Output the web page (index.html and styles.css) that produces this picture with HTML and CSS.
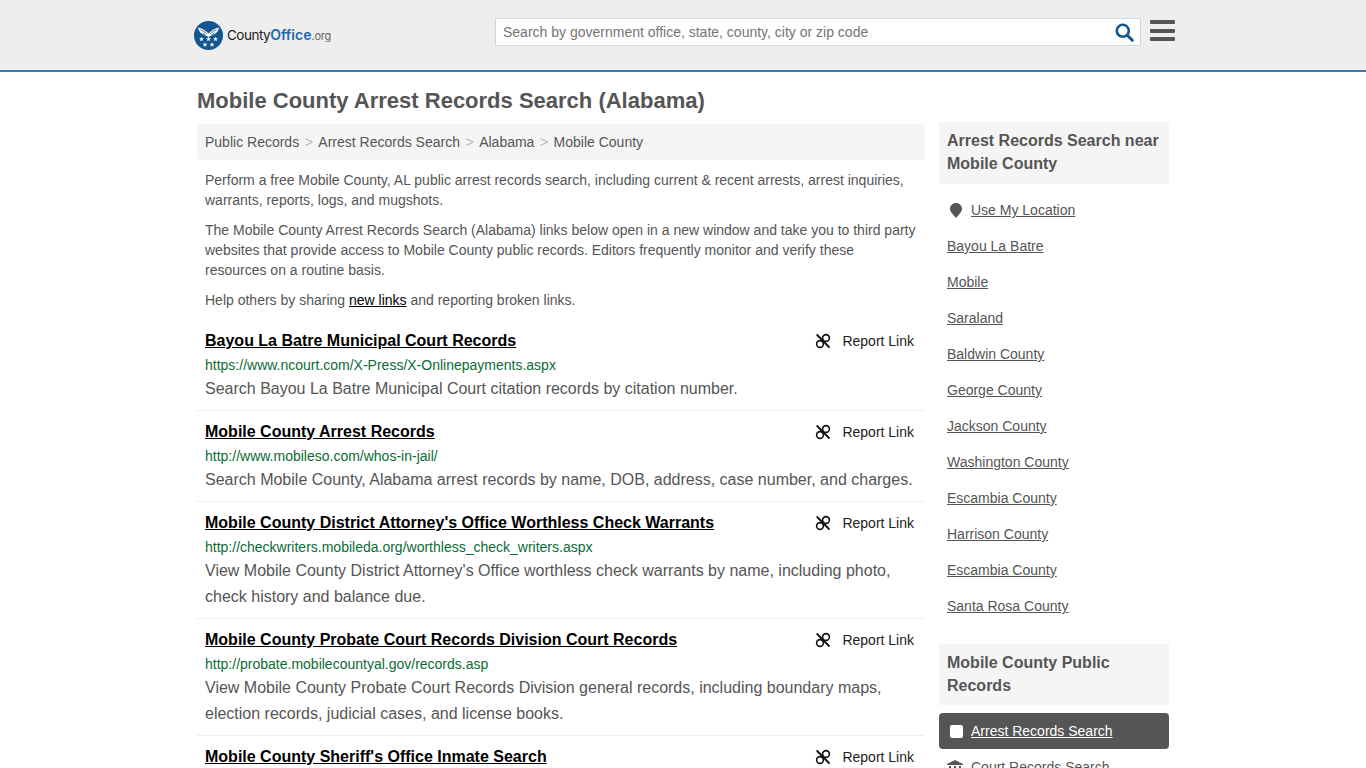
FILE: index.html
```html
<!DOCTYPE html>
<html lang="en">
<head>
    <meta charset="UTF-8">
    <title>Mobile County Arrest Records Search (Alabama)</title>
    <link rel="stylesheet" href="styles.css">
</head>
<body>
    <svg class="sprites" width="0" height="0">
        <symbol id="unlink" viewBox="0 0 16 16">
            <circle cx="11" cy="5" r="3.400" fill="none" stroke="currentColor" stroke-width="1.600"/>
            <circle cx="5" cy="11" r="3.400" fill="none" stroke="currentColor" stroke-width="1.600"/>
            <path d="M2.200 2 L14 14" fill="none" stroke="currentColor" stroke-width="1.800" stroke-linecap="round"/>
        </symbol>
        <symbol id="star" viewBox="0 0 10 10">
            <path d="M5 0 L6.200 3.600 H10 L7 5.900 L8.100 9.600 L5 7.400 L1.900 9.600 L3 5.900 L0 3.600 H3.800 Z" fill="#fff"/>
        </symbol>
    </svg>

    <header class="site-header">
        <div class="wrap header-row">
            <a class="logo" href="#">
                <svg class="logo-mark" width="29" height="29" viewBox="0 0 29 29">
                    <circle cx="14.500" cy="14.500" r="14.500" fill="#14568f"/>
                    <path d="M4 6.500 C8 7 11 9 14.500 12.500 C18 9 21 7 25 6.500 C24.500 10 22 13 18.500 14 L14.500 16 L10.500 14 C7 13 4.500 10 4 6.500 Z" fill="#fff"/>
                    <path d="M6.500 8.800 C9 9.500 11 11 12.800 13 M8.500 12 L11.500 13.600 M22.500 8.800 C20 9.500 18 11 16.200 13 M20.500 12 L17.500 13.600" fill="none" stroke="#14568f" stroke-width=".8"/>
                    <use href="#star" x="5" y="15.500" width="5" height="5"/>
                    <use href="#star" x="12" y="15.500" width="5" height="5"/>
                    <use href="#star" x="19" y="15.500" width="5" height="5"/>
                    <use href="#star" x="8.500" y="21" width="5" height="5"/>
                    <use href="#star" x="15.500" y="21" width="5" height="5"/>
                </svg>
                <span class="logo-text">County<b>Office</b><small>.org</small></span>
            </a>
            <form class="search">
                <input type="text" placeholder="Search by government office, state, county, city or zip code">
                <svg class="search-icon" width="19" height="19" viewBox="0 0 19 19">
                    <circle cx="7.800" cy="7.800" r="6" fill="none" stroke="#14568f" stroke-width="2.600"/>
                    <path d="M12.200 12.200 L17.300 17.300" stroke="#14568f" stroke-width="3" stroke-linecap="round"/>
                </svg>
            </form>
            <div class="burger"><span></span><span></span><span></span></div>
        </div>
    </header>

    <div class="wrap">
        <h1>Mobile County Arrest Records Search (Alabama)</h1>
        <div class="columns">
            <main class="content">
                <div class="breadcrumb">
                    <a href="#">Public Records</a><i>&gt;</i><a href="#">Arrest Records Search</a><i>&gt;</i><a href="#">Alabama</a><i>&gt;</i><a href="#">Mobile County</a>
                </div>
                <div class="intro">
                    <p>Perform a free Mobile County, AL public arrest records search, including current &amp; recent arrests, arrest inquiries, warrants, reports, logs, and mugshots.</p>
                    <p>The Mobile County Arrest Records Search (Alabama) links below open in a new window and take you to third party websites that provide access to Mobile County public records. Editors frequently monitor and verify these resources on a routine basis.</p>
                    <p>Help others by sharing <a href="#">new links</a> and reporting broken links.</p>
                </div>

                <div class="record">
                    <div class="record-head">
                        <a class="record-title" href="#">Bayou La Batre Municipal Court Records</a>
                        <a class="report" href="#"><svg width="16" height="16"><use href="#unlink"/></svg>Report Link</a>
                    </div>
                    <div class="record-url">https://www.ncourt.com/X-Press/X-Onlinepayments.aspx</div>
                    <p class="record-desc">Search Bayou La Batre Municipal Court citation records by citation number.</p>
                </div>
                <div class="record">
                    <div class="record-head">
                        <a class="record-title" href="#">Mobile County Arrest Records</a>
                        <a class="report" href="#"><svg width="16" height="16"><use href="#unlink"/></svg>Report Link</a>
                    </div>
                    <div class="record-url">http://www.mobileso.com/whos-in-jail/</div>
                    <p class="record-desc">Search Mobile County, Alabama arrest records by name, DOB, address, case number, and charges.</p>
                </div>
                <div class="record">
                    <div class="record-head">
                        <a class="record-title" href="#">Mobile County District Attorney's Office Worthless Check Warrants</a>
                        <a class="report" href="#"><svg width="16" height="16"><use href="#unlink"/></svg>Report Link</a>
                    </div>
                    <div class="record-url">http://checkwriters.mobileda.org/worthless_check_writers.aspx</div>
                    <p class="record-desc">View Mobile County District Attorney's Office worthless check warrants by name, including photo, check history and balance due.</p>
                </div>
                <div class="record">
                    <div class="record-head">
                        <a class="record-title" href="#">Mobile County Probate Court Records Division Court Records</a>
                        <a class="report" href="#"><svg width="16" height="16"><use href="#unlink"/></svg>Report Link</a>
                    </div>
                    <div class="record-url">http://probate.mobilecountyal.gov/records.asp</div>
                    <p class="record-desc">View Mobile County Probate Court Records Division general records, including boundary maps, election records, judicial cases, and license books.</p>
                </div>
                <div class="record">
                    <div class="record-head">
                        <a class="record-title" href="#">Mobile County Sheriff's Office Inmate Search</a>
                        <a class="report" href="#"><svg width="16" height="16"><use href="#unlink"/></svg>Report Link</a>
                    </div>
                </div>
            </main>

            <aside class="sidebar">
                <h2>Arrest Records Search near Mobile County</h2>
                <ul class="near">
                    <li class="locate">
                        <svg width="12" height="15" viewBox="0 0 12 15"><path d="M6 0 C9.300 0 12 2.500 12 5.800 C12 9 8 12.500 6 15 C4 12.500 0 9 0 5.800 C0 2.500 2.700 0 6 0 Z" fill="#555"/></svg>
                        <a href="#">Use My Location</a>
                    </li>
                    <li><a href="#">Bayou La Batre</a></li>
                    <li><a href="#">Mobile</a></li>
                    <li><a href="#">Saraland</a></li>
                    <li><a href="#">Baldwin County</a></li>
                    <li><a href="#">George County</a></li>
                    <li><a href="#">Jackson County</a></li>
                    <li><a href="#">Washington County</a></li>
                    <li><a href="#">Escambia County</a></li>
                    <li><a href="#">Harrison County</a></li>
                    <li><a href="#">Escambia County</a></li>
                    <li><a href="#">Santa Rosa County</a></li>
                </ul>
                <h2 class="second">Mobile County Public Records</h2>
                <ul class="topics">
                    <li class="active"><span class="check"></span><a href="#">Arrest Records Search</a></li>
                    <li>
                        <svg class="court-icon" width="16" height="14" viewBox="0 0 16 14"><path d="M8 0 L16 4 V5 H0 V4 Z M2 6 H4 V11 H2 Z M7 6 H9 V11 H7 Z M12 6 H14 V11 H12 Z M1 12 H15 V14 H1 Z" fill="#555"/></svg>
                        <a href="#">Court Records Search</a>
                    </li>
                </ul>
            </aside>
        </div>
    </div>
</body>
</html>
```

FILE: styles.css
```css
html, body {
    height: 768px;
    overflow: hidden;
}
body {
    margin: 0;
    font-family: "Liberation Sans", Arial, sans-serif;
    font-size: 14px;
    line-height: 20px;
    color: #555;
    background: #fff;
}
a {
    color: #555;
}
.sprites {
    display: block;
    height: 0;
}
.wrap {
    width: 972px;
    margin: 0 auto;
}
.site-header {
    height: 70px;
    background: #eee;
    border-bottom: 2px solid #337ab7;
}
.header-row {
    display: flex;
    align-items: center;
    height: 70px;
}
.logo {
    display: flex;
    align-items: center;
    flex: none;
    width: 301px;
    margin-left: -3px;
    text-decoration: none;
    color: #222;
}
.logo-text {
    margin-left: 4px;
    font-family: Inter, "Liberation Sans", sans-serif;
    font-size: 13.500px;
    letter-spacing: -0.5px;
}
.logo-text b {
    font-weight: 600;
    font-size: 14px;
    letter-spacing: 0;
    color: #1b6ab0;
}
.logo-text small {
    font-size: 11px;
    letter-spacing: -0.2px;
    color: #666;
}
.search {
    position: relative;
    flex: none;
    width: 646px;
    height: 28px;
    margin-top: -7px;
}
.search input {
    width: 100%;
    height: 100%;
    box-sizing: border-box;
    padding: 0 40px 0 7px;
    border: 1px solid #c9d9e8;
    background: #fff;
    font: 14px "Liberation Sans", Arial, sans-serif;
    color: #555;
    outline: none;
}
.search input::placeholder {
    color: #757575;
}
.search-icon {
    position: absolute;
    top: 5px;
    right: 7px;
}
.burger {
    display: flex;
    flex-direction: column;
    flex: none;
    gap: 4.500px;
    width: 25px;
    margin-left: 9px;
    margin-top: -9px;
}
.burger span {
    display: block;
    height: 4px;
    background: #555;
    border-radius: 1px;
}
h1 {
    margin: 17px 0 11px;
    font-size: 22px;
    line-height: 24px;
    font-weight: bold;
    color: #555;
}
.columns {
    display: flex;
    gap: 14px;
    align-items: flex-start;
}
.content {
    width: 728px;
}
.breadcrumb {
    height: 36px;
    box-sizing: border-box;
    padding: 8px;
    background: #f5f5f5;
    border-radius: 4px;
}
.breadcrumb a {
    text-decoration: none;
}
.breadcrumb i {
    font-style: normal;
    color: #bbb;
    padding: 0 5.500px;
}
.intro {
    padding: 10px 8px 0;
}
.intro p {
    margin: 0 0 10px;
}
.intro a {
    color: #000;
}
.record {
    padding: 11px 8px 8px;
    border-bottom: 1px solid #eee;
}
.record-head {
    display: flex;
    justify-content: space-between;
    align-items: center;
    padding-right: 3px;
}
.record-title {
    font-size: 16px;
    font-weight: bold;
    color: #000;
}
.report {
    display: flex;
    align-items: center;
    gap: 11px;
    color: #222;
    text-decoration: none;
}
.report svg {
    color: #111;
}
.record-url {
    margin-top: 4px;
    color: #0b6b35;
}
.record-desc {
    margin: 0;
    font-size: 16px;
    line-height: 26px;
    margin-top: 1px;
}
.sidebar {
    width: 230px;
    margin-top: -2px;
}
.sidebar h2 {
    margin: 0;
    padding: 7px 8px 9px;
    background: #f5f5f5;
    font-size: 16px;
    line-height: 23px;
    font-weight: bold;
    color: #555;
}
.sidebar .second {
    padding-bottom: 8px;
}
.near, .topics {
    list-style: none;
    margin: 0;
    padding: 0;
}
.near {
    padding: 8px 0 20px;
}
.near li {
    padding: 8px;
}
.near .locate {
    display: flex;
    align-items: center;
    gap: 9px;
    padding-left: 11px;
}
.topics {
    padding-top: 8px;
}
.topics li {
    display: flex;
    align-items: center;
    gap: 8px;
    height: 36px;
    padding: 0 12px 0 8px;
    border-radius: 4px;
}
.topics .active {
    background: #555;
    padding-left: 11px;
}
.topics .active a {
    color: #fff;
}
.court-icon {
    margin-top: -1px;
}
.check {
    width: 13px;
    height: 13px;
    background: #fff;
    border-radius: 2px;
}
```
